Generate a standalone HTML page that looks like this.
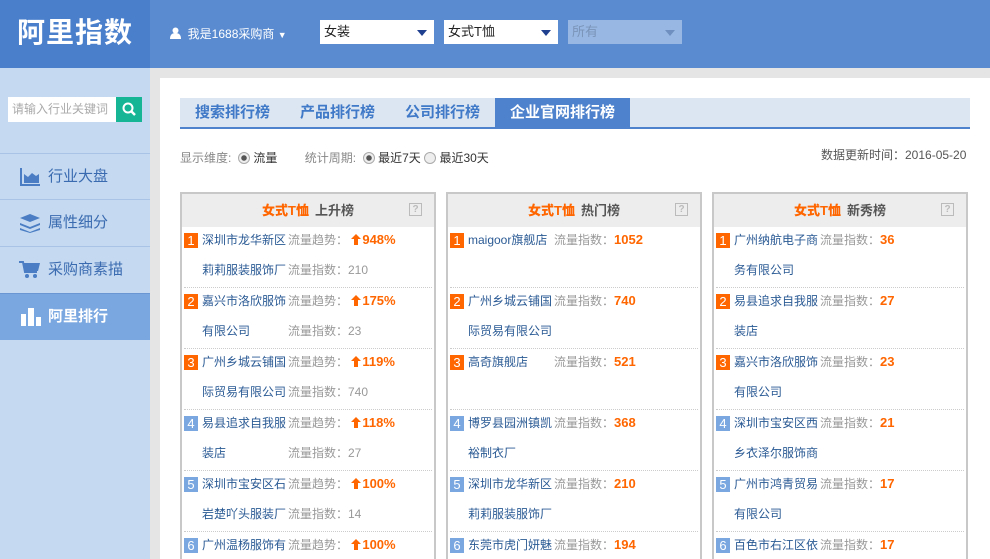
<!DOCTYPE html><html><head><meta charset="utf-8"><style>
*{margin:0;padding:0;box-sizing:border-box}
html,body{width:990px;height:559px;overflow:hidden}
body{position:relative;background:#e5e5e5;font-family:"Liberation Sans","Noto Sans CJK SC",sans-serif;font-size:12px}
.a{position:absolute}
#hd{left:0;top:0;width:990px;height:68px;background:#5a8bd0}
#logo{left:0;top:0;width:150px;height:68px;background:#4a7fcb;color:#fff;font-size:28px;line-height:66px;text-align:center;font-weight:bold;letter-spacing:1px}
.sel{top:20px;height:24px;background:#fff;font-size:13px;line-height:24px;padding-left:4px;color:#222}
.sel i{position:absolute;right:7px;top:10px;border-left:5px solid transparent;border-right:5px solid transparent;border-top:6px solid #1f3f8f}
#side{left:0;top:68px;width:150px;height:491px;background:#c5d9f1}
.mi{left:0;width:150px;height:47px;border-top:1px solid #a9c3e6;color:#3a6bb0;font-size:15px;line-height:46px;padding-left:48px}
#main{left:160px;top:78px;width:830px;height:481px;background:#fff}
.tab{top:98px;height:31px;line-height:30px;font-size:15px;font-weight:bold;color:#3f79c7;text-align:center}
.col{top:192px;width:256px;height:367px;border:2px solid #c8c8c8;border-bottom:none;background:#fff;overflow:hidden}
.ch{height:33px;background:#ededed;text-align:center;line-height:34px;font-weight:bold;font-size:13px;color:#555}
.ch b{color:#f60;margin-right:6px}
.q{position:absolute;right:12px;top:9px;width:13px;height:13px;border:1px solid #bbb;color:#bbb;font-size:10px;line-height:11px;text-align:center;font-weight:bold}
.r{position:absolute;left:2px;width:248px;height:61px;border-bottom:1px dotted #ccc}
.n{position:absolute;left:0;top:6px;width:14px;height:15px;color:#fff;text-align:center;line-height:15px;font-size:13px}
.o{background:#f60}.b{background:#7aa7e0}
.t{position:absolute;color:#2a5a94;white-space:nowrap;font-size:12px;line-height:16px}
.l{position:absolute;left:104px;color:#999;white-space:nowrap;font-size:12px;line-height:16px}
.v{color:#f60;font-weight:bold;font-size:13px}
.v svg{vertical-align:-1px;margin-right:1px}
</style></head><body>
<div id="hd" class="a"></div>
<div id="logo" class="a">阿里指数</div>
<div class="a" style="left:170px;top:25px;color:#fff;font-size:12px">
<svg width="11" height="12" style="vertical-align:-1px"><circle cx="5.5" cy="3.5" r="3" fill="#fff"/><path d="M0 12 Q0 6 5.5 6 Q11 6 11 12Z" fill="#fff"/></svg>&nbsp; 我是1688采购商 <span style="font-size:9px">▼</span></div>
<div class="a sel" style="left:320px;width:114px">女装<i></i></div>
<div class="a sel" style="left:444px;width:114px">女式T恤<i></i></div>
<div class="a sel" style="left:568px;width:114px;background:#98b8e3;color:#7a93b8">所有<i style="border-top-color:#6f8fc0"></i></div>
<div id="side" class="a"></div>
<div class="a" style="left:8px;top:97px;width:108px;height:25px;background:#fff;color:#aaa;font-size:12px;line-height:25px;padding-left:4px">请输入行业关键词</div>
<div class="a" style="left:116px;top:97px;width:26px;height:25px;background:#16b596"><svg width="26" height="25"><circle cx="12" cy="11" r="4.5" stroke="#fff" stroke-width="2" fill="none"/><path d="M15 14 L19 18" stroke="#fff" stroke-width="2.5"/></svg></div>
<div class="a mi" style="top:153px">行业大盘</div>
<div class="a mi" style="top:199px">属性细分</div>
<div class="a mi" style="top:246px">采购商素描</div>
<div class="a mi" style="top:293px;background:#7aa7e0;color:#fff;font-weight:bold;border-top:1px solid #6a97d4">阿里排行</div>
<svg class="a" style="left:19px;top:166px" width="22" height="22"><path d="M1 2V20H21V18H3V2Z" fill="#4a7dc4"/><path d="M5 17V8L9 11L13 7L17 10L20 8V17Z" fill="#4a7dc4"/></svg>
<svg class="a" style="left:19px;top:213px" width="22" height="20"><path d="M1 5L11 1L21 5L11 9Z" fill="#4a7dc4"/><path d="M1 10L11 14L21 10L21 12L11 16L1 12Z" fill="#4a7dc4"/><path d="M1 15L11 19L21 15L21 17L11 20L1 17Z" fill="#4a7dc4"/></svg>
<svg class="a" style="left:19px;top:259px" width="22" height="20"><path d="M0 3H4L6 12H19L21 4H5" fill="#4a7dc4"/><path d="M0 3H4L6 13H18" stroke="#4a7dc4" stroke-width="2" fill="none"/><circle cx="8" cy="17" r="2" fill="#4a7dc4"/><circle cx="16" cy="17" r="2" fill="#4a7dc4"/></svg>
<svg class="a" style="left:21px;top:306px" width="20" height="20"><rect x="0" y="8" width="5" height="12" fill="#fff"/><rect x="7" y="2" width="6" height="18" fill="#fff"/><rect x="15" y="11" width="5" height="9" fill="#fff"/></svg>
<div id="main" class="a"></div>
<div class="a" style="left:180px;top:98px;width:790px;height:31px;background:#dce6f2;border-bottom:2px solid #4e82cc"></div>
<div class="a tab" style="left:180px;width:105px">搜索排行榜</div>
<div class="a tab" style="left:285px;width:105px">产品排行榜</div>
<div class="a tab" style="left:390px;width:105px">公司排行榜</div>
<div class="a tab" style="left:495px;width:135px;background:#4e82cc;color:#fff">企业官网排行榜</div>
<div class="a" style="left:180px;top:149px;color:#888;font-size:12px;white-space:nowrap">显示维度: &nbsp;<span style="display:inline-block;width:12px;height:12px;border-radius:50%;border:1px solid #aaa;background:radial-gradient(#555 2.5px,#eee 3px);vertical-align:-2px"></span> <span style="color:#333">流量</span>
<span style="margin-left:24px">统计周期: &nbsp;<span style="display:inline-block;width:12px;height:12px;border-radius:50%;border:1px solid #aaa;background:radial-gradient(#555 2.5px,#eee 3px);vertical-align:-2px"></span> <span style="color:#333">最近7天</span> <span style="display:inline-block;width:12px;height:12px;border-radius:50%;border:1px solid #aaa;background:#eee;vertical-align:-2px"></span> <span style="color:#333">最近30天</span></span></div>
<div class="a" style="left:821px;top:146px;color:#555;font-size:12px">数据更新时间：2016-05-20</div>

<div class="a col" style="left:180px"><div class="ch"><b>女式T恤</b>上升榜</div><div class="q">?</div>
<div class="r" style="top:33px"><div class="n o">1</div><div class="t" style="left:18px;top:5px">深圳市龙华新区</div><div class="t" style="left:18px;top:35px">莉莉服装服饰厂</div><div class="l" style="top:5px">流量趋势： <span class="v"><svg width="10" height="11"><path d="M5 0L10 5H7V11H3V5H0Z" fill="#f60"/></svg>948%</span></div><div class="l" style="top:35px">流量指数：210</div></div>
<div class="r" style="top:94px"><div class="n o">2</div><div class="t" style="left:18px;top:5px">嘉兴市洛欣服饰</div><div class="t" style="left:18px;top:35px">有限公司</div><div class="l" style="top:5px">流量趋势： <span class="v"><svg width="10" height="11"><path d="M5 0L10 5H7V11H3V5H0Z" fill="#f60"/></svg>175%</span></div><div class="l" style="top:35px">流量指数：23</div></div>
<div class="r" style="top:155px"><div class="n o">3</div><div class="t" style="left:18px;top:5px">广州乡城云铺国</div><div class="t" style="left:18px;top:35px">际贸易有限公司</div><div class="l" style="top:5px">流量趋势： <span class="v"><svg width="10" height="11"><path d="M5 0L10 5H7V11H3V5H0Z" fill="#f60"/></svg>119%</span></div><div class="l" style="top:35px">流量指数：740</div></div>
<div class="r" style="top:216px"><div class="n b">4</div><div class="t" style="left:18px;top:5px">易县追求自我服</div><div class="t" style="left:18px;top:35px">装店</div><div class="l" style="top:5px">流量趋势： <span class="v"><svg width="10" height="11"><path d="M5 0L10 5H7V11H3V5H0Z" fill="#f60"/></svg>118%</span></div><div class="l" style="top:35px">流量指数：27</div></div>
<div class="r" style="top:277px"><div class="n b">5</div><div class="t" style="left:18px;top:5px">深圳市宝安区石</div><div class="t" style="left:18px;top:35px">岩楚吖头服装厂</div><div class="l" style="top:5px">流量趋势： <span class="v"><svg width="10" height="11"><path d="M5 0L10 5H7V11H3V5H0Z" fill="#f60"/></svg>100%</span></div><div class="l" style="top:35px">流量指数：14</div></div>
<div class="r" style="top:338px"><div class="n b">6</div><div class="t" style="left:18px;top:5px">广州温杨服饰有</div><div class="l" style="top:5px">流量趋势： <span class="v"><svg width="10" height="11"><path d="M5 0L10 5H7V11H3V5H0Z" fill="#f60"/></svg>100%</span></div></div>
</div>

<div class="a col" style="left:446px"><div class="ch"><b>女式T恤</b>热门榜</div><div class="q">?</div>
<div class="r" style="top:33px"><div class="n o">1</div><div class="t" style="left:18px;top:5px">maigoor旗舰店</div><div class="l" style="top:5px">流量指数：<span class="v">1052</span></div></div>
<div class="r" style="top:94px"><div class="n o">2</div><div class="t" style="left:18px;top:5px">广州乡城云铺国</div><div class="t" style="left:18px;top:35px">际贸易有限公司</div><div class="l" style="top:5px">流量指数：<span class="v">740</span></div></div>
<div class="r" style="top:155px"><div class="n o">3</div><div class="t" style="left:18px;top:5px">高奇旗舰店</div><div class="l" style="top:5px">流量指数：<span class="v">521</span></div></div>
<div class="r" style="top:216px"><div class="n b">4</div><div class="t" style="left:18px;top:5px">博罗县园洲镇凯</div><div class="t" style="left:18px;top:35px">裕制衣厂</div><div class="l" style="top:5px">流量指数：<span class="v">368</span></div></div>
<div class="r" style="top:277px"><div class="n b">5</div><div class="t" style="left:18px;top:5px">深圳市龙华新区</div><div class="t" style="left:18px;top:35px">莉莉服装服饰厂</div><div class="l" style="top:5px">流量指数：<span class="v">210</span></div></div>
<div class="r" style="top:338px"><div class="n b">6</div><div class="t" style="left:18px;top:5px">东莞市虎门妍魅</div><div class="l" style="top:5px">流量指数：<span class="v">194</span></div></div>
</div>

<div class="a col" style="left:712px"><div class="ch"><b>女式T恤</b>新秀榜</div><div class="q">?</div>
<div class="r" style="top:33px"><div class="n o">1</div><div class="t" style="left:18px;top:5px">广州纳航电子商</div><div class="t" style="left:18px;top:35px">务有限公司</div><div class="l" style="top:5px">流量指数：<span class="v">36</span></div></div>
<div class="r" style="top:94px"><div class="n o">2</div><div class="t" style="left:18px;top:5px">易县追求自我服</div><div class="t" style="left:18px;top:35px">装店</div><div class="l" style="top:5px">流量指数：<span class="v">27</span></div></div>
<div class="r" style="top:155px"><div class="n o">3</div><div class="t" style="left:18px;top:5px">嘉兴市洛欣服饰</div><div class="t" style="left:18px;top:35px">有限公司</div><div class="l" style="top:5px">流量指数：<span class="v">23</span></div></div>
<div class="r" style="top:216px"><div class="n b">4</div><div class="t" style="left:18px;top:5px">深圳市宝安区西</div><div class="t" style="left:18px;top:35px">乡衣泽尔服饰商</div><div class="l" style="top:5px">流量指数：<span class="v">21</span></div></div>
<div class="r" style="top:277px"><div class="n b">5</div><div class="t" style="left:18px;top:5px">广州市鸿青贸易</div><div class="t" style="left:18px;top:35px">有限公司</div><div class="l" style="top:5px">流量指数：<span class="v">17</span></div></div>
<div class="r" style="top:338px"><div class="n b">6</div><div class="t" style="left:18px;top:5px">百色市右江区依</div><div class="l" style="top:5px">流量指数：<span class="v">17</span></div></div>
</div>
</body></html>
